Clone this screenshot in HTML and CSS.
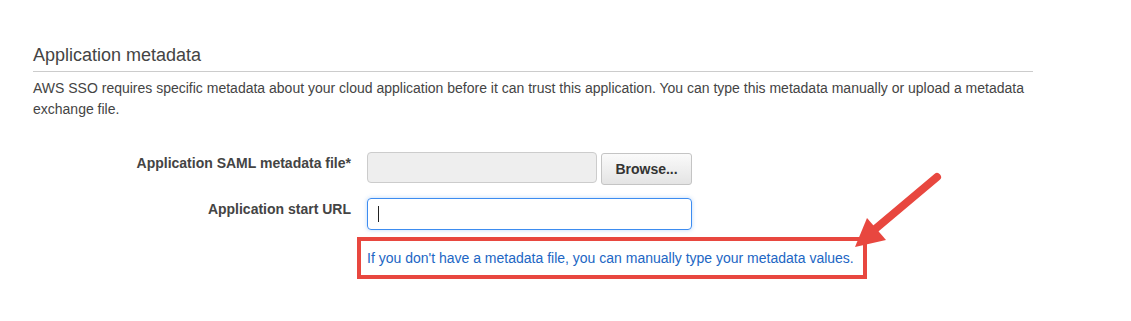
FILE: index.html
```html
<!DOCTYPE html>
<html>
<head>
    <link rel="stylesheet" href="styles.css">
</head>
<body>
    <div class="page">
        <h2 class="section-title">Application metadata</h2>
        <p class="section-desc">AWS SSO requires specific metadata about your cloud application before it can trust this application. You can type this metadata manually or upload a metadata exchange file.</p>

        <div class="form-row">
            <label class="form-label">Application SAML metadata file*</label>
            <div class="form-field">
                <div class="file-input"></div>
                <button class="browse-button">Browse...</button>
            </div>
        </div>

        <div class="form-row">
            <label class="form-label">Application start URL</label>
            <div class="form-field column">
                <div class="text-input focused"><span class="caret"></span></div>
                <div class="help-box">
                    <a href="#" class="help-link">If you don't have a metadata file, you can manually type your metadata values.</a>
                </div>
            </div>
        </div>

        <!-- annotation arrow drawn over the page -->
        <svg class="callout-arrow" width="120" height="100" viewBox="830 160 120 100">
            <line x1="937" y1="177" x2="874" y2="230" stroke="#e8473f" stroke-width="8" stroke-linecap="round"/>
            <polygon points="855,247 867,218 886,240" fill="#e8473f"/>
        </svg>
    </div>
</body>
</html>
```

FILE: styles.css
```css
body {
    background-color: #FFFFFF;
    font-family: "Liberation Sans", Arial, sans-serif;
    color: #444;
    margin: 0;
}

.page {
    position: relative;
    width: 1000px;
    padding: 45px 0 0 33px;
}

.section-title {
    font-size: 18px;
    font-weight: normal;
    line-height: 20px;
    color: #444;
    margin: 0;
    padding-bottom: 6px;
    border-bottom: 1px solid #ccc;
}

.section-desc {
    font-size: 14px;
    line-height: 21px;
    margin: 6px 0 0 0;
    padding-right: 4px;
}

.form-row {
    display: flex;
    align-items: flex-start;
    gap: 16px;
    margin-top: 13px;
}

.section-desc + .form-row {
    margin-top: 32px;
}

.form-label {
    width: 318px;
    text-align: right;
    font-size: 14px;
    font-weight: bold;
    line-height: 20px;
    padding-top: 1px;
    color: #444;
}

.form-field {
    display: flex;
    align-items: flex-start;
    gap: 4px;
}

.form-field.column {
    flex-direction: column;
    gap: 7px;
}

.file-input {
    width: 230px;
    height: 31px;
    box-sizing: border-box;
    background-color: #eee;
    border: 1px solid #ccc;
    border-radius: 4px;
}

.browse-button {
    width: 91px;
    height: 32px;
    margin-top: 1px;
    font-family: "Liberation Sans", Arial, sans-serif;
    font-size: 14px;
    font-weight: bold;
    color: #333;
    background: linear-gradient(#fafafa, #e4e4e4);
    border: 1px solid #c4c4c4;
    border-radius: 3px;
}

.text-input {
    width: 325px;
    height: 32px;
    box-sizing: border-box;
    border: 1px solid #3d8cf0;
    border-radius: 4px;
    box-shadow: 0 0 4px rgba(61, 140, 240, 0.35);
    display: flex;
    align-items: center;
    padding-left: 10px;
}

.caret {
    width: 1px;
    height: 16px;
    background-color: #222;
}

.help-box {
    width: 510px;
    box-sizing: border-box;
    margin-left: -10px;
    border: 4px solid #e8473f;
    padding: 7px 6px;
    line-height: 20px;
}

.help-link {
    font-size: 14px;
    color: #2166c4;
    text-decoration: none;
}

.callout-arrow {
    position: absolute;
    left: 830px;
    top: 160px;
}
```
